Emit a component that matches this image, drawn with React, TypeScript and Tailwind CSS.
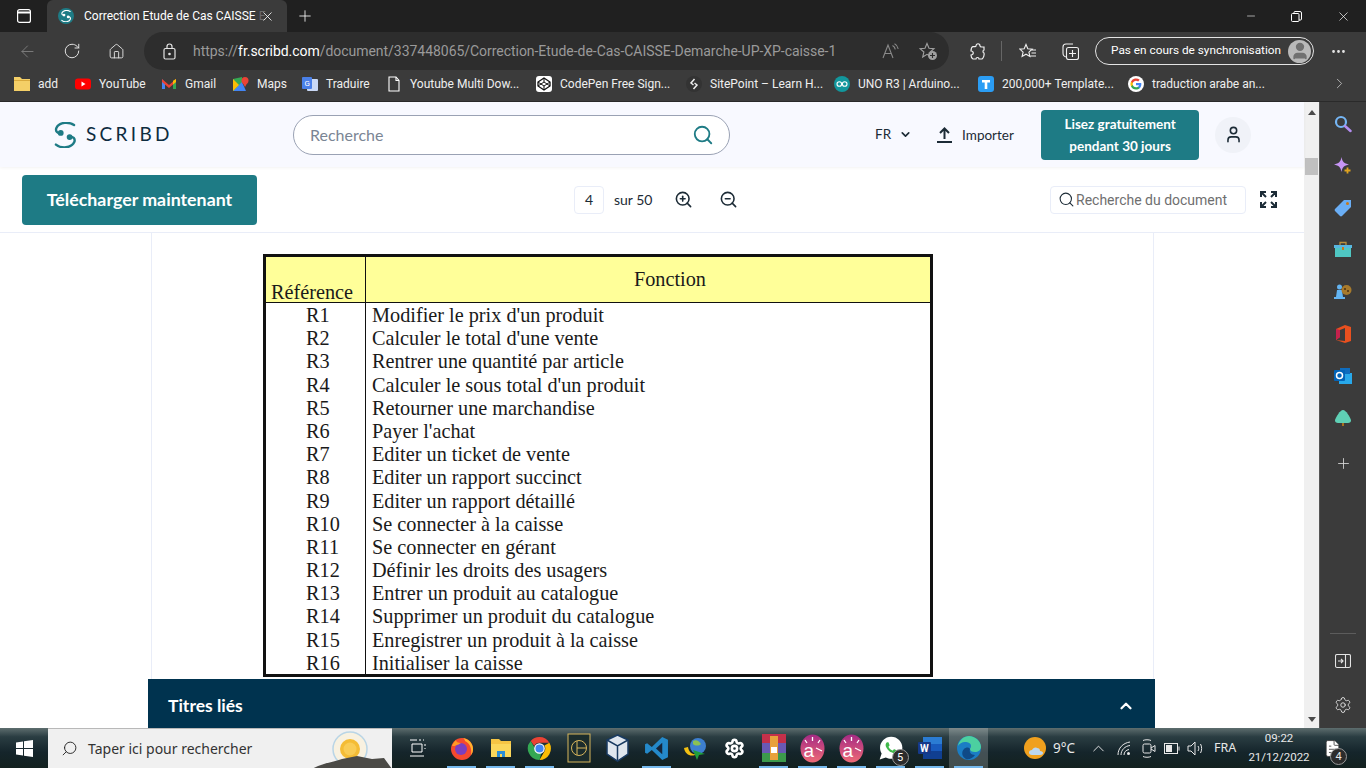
import { ReactNode } from "react";
import { IoLogoWhatsapp } from "react-icons/io";
import {
  ArrowLeft,
  ChevronDown,
  ChevronRight,
  ChevronUp,
  Ellipsis,
  House,
  Minus,
  Plus,
  RotateCw,
  Search,
  Settings,
  User,
  X,
  ZoomIn,
  ZoomOut,
  FileText,
} from "lucide-react";

const rows = [
  ["R1", "Modifier le prix d'un produit"],
  ["R2", "Calculer le total d'une vente"],
  ["R3", "Rentrer une quantité par article"],
  ["R4", "Calculer le sous total d'un produit"],
  ["R5", "Retourner une marchandise"],
  ["R6", "Payer l'achat"],
  ["R7", "Editer un ticket de vente"],
  ["R8", "Editer un rapport succinct"],
  ["R9", "Editer un rapport détaillé"],
  ["R10", "Se connecter à la caisse"],
  ["R11", "Se connecter en gérant"],
  ["R12", "Définir les droits des usagers"],
  ["R13", "Entrer un produit au catalogue"],
  ["R14", "Supprimer un produit du catalogue"],
  ["R15", "Enregistrer un produit à la caisse"],
  ["R16", "Initialiser la caisse"],
];

function ScribdMark({ w, h, color }: { w: number; h: number; color: string }) {
  return (
    <svg width={w} height={h} viewBox="0 0 63 76" fill="none">
      <path d="M58 9C45 0 15-2 6 18C3 28 10 33 18 34" stroke={color} strokeWidth="7" strokeLinecap="round" />
      <path d="M5 66C20 78 50 78 59 58C62 48 55 43 46 42" stroke={color} strokeWidth="7" strokeLinecap="round" />
      <circle cx="19" cy="32" r="8.500" fill={color} />
      <circle cx="45" cy="44" r="8.500" fill={color} />
    </svg>
  );
}

function GoogleIcon() {
  return (
    <svg width="16" height="16" viewBox="0 0 24 24">
      <circle cx="12" cy="12" r="12" fill="#fff" />
      <path d="M20 12.200c0-.6-.1-1.200-.2-1.700H12v3.300h4.500a3.900 3.900 0 0 1-1.700 2.500v2.100h2.700c1.600-1.500 2.500-3.600 2.500-6.200z" fill="#4285f4" />
      <path d="M12 20.300c2.200 0 4.100-.7 5.500-2l-2.700-2.100c-.7.500-1.700.8-2.800.8-2.200 0-4-1.400-4.700-3.400H4.500v2.100a8.300 8.300 0 0 0 7.500 4.600z" fill="#34a853" />
      <path d="M7.300 13.600a5 5 0 0 1 0-3.200V8.300H4.500a8.300 8.300 0 0 0 0 7.400z" fill="#fbbc05" />
      <path d="M12 7c1.200 0 2.300.4 3.200 1.200l2.400-2.400A8.300 8.300 0 0 0 4.500 8.300l2.800 2.100C8 8.400 9.800 7 12 7z" fill="#ea4335" />
    </svg>
  );
}

const bookmarks: { label: string; cls: string; icon: ReactNode }[] = [
  {
    label: "add",
    cls: "w-[61px]",
    icon: (
      <svg width="16" height="16" viewBox="0 0 16 16">
        <path d="M0 1h6l2 2h8v12H0z" fill="#f4cf67" />
        <path d="M0 4h16v1H0z" fill="#d9a93c" />
      </svg>
    ),
  },
  {
    label: "YouTube",
    cls: "w-[86px]",
    icon: (
      <svg width="16" height="16" viewBox="0 0 16 16">
        <rect y="2.500" width="16" height="11" rx="3" fill="#f00" />
        <path d="M6.500 5.500v5l4-2.500z" fill="#fff" />
      </svg>
    ),
  },
  {
    label: "Gmail",
    cls: "w-[72px]",
    icon: (
      <svg width="16" height="16" viewBox="0 0 16 16">
        <path d="M1 3v10h3V7z" fill="#4285f4" />
        <path d="M15 3v10h-3V7z" fill="#34a853" />
        <path d="M1 3l7 6 7-6v3L8 12 1 6z" fill="#ea4335" />
        <path d="M12 4.700 15 3v3l-3 2.500z" fill="#fbbc05" />
      </svg>
    ),
  },
  {
    label: "Maps",
    cls: "w-[69px]",
    icon: (
      <svg width="16" height="16" viewBox="0 0 16 16">
        <path d="M0 3l9-2v14l-9 0z" fill="#34a853" />
        <path d="M0 15 9 6l4 9z" fill="#4285f4" />
        <path d="M0 3l6 6-6 6z" fill="#fbbc05" />
        <circle cx="12" cy="4.500" r="3.500" fill="#ea4335" />
        <path d="M9.500 6.500 12 11l2.500-4.500z" fill="#ea4335" />
      </svg>
    ),
  },
  {
    label: "Traduire",
    cls: "w-[84px]",
    icon: (
      <svg width="16" height="16" viewBox="0 0 16 16">
        <rect x="5" y="3" width="11" height="12" rx="1" fill="#c9d8f5" />
        <rect y="1" width="10" height="12" rx="1" fill="#4a80e8" />
        <text x="2.500" y="10" fontSize="8" fill="#fff" fontFamily="Roboto, sans-serif">G</text>
      </svg>
    ),
  },
  {
    label: "Youtube Multi Dow...",
    cls: "w-[150px]",
    icon: (
      <svg width="16" height="16" viewBox="0 0 16 16" fill="none" stroke="#fff" strokeWidth="1.100">
        <path d="M3 1h7l3 3.500V15H3z" />
        <path d="M10 1v3.500h3" />
      </svg>
    ),
  },
  {
    label: "CodePen Free Sign...",
    cls: "w-[150px]",
    icon: (
      <svg width="16" height="16" viewBox="0 0 16 16">
        <rect width="16" height="16" rx="3" fill="#fff" />
        <path d="M8 2l6 4v4l-6 4-6-4V6z" fill="none" stroke="#111" strokeWidth="1.300" />
        <path d="M2 6l6 4 6-4M2 10l6-4 6 4M8 2v4M8 10v4" fill="none" stroke="#111" strokeWidth="1" />
      </svg>
    ),
  },
  {
    label: "SitePoint – Learn H...",
    cls: "w-[148px]",
    icon: (
      <svg width="16" height="16" viewBox="0 0 16 16">
        <circle cx="8" cy="8" r="8" fill="#333" />
        <path d="M8.500 3 5 7l2.500 2M7.500 13 11 9 8.500 7" fill="none" stroke="#eee" strokeWidth="1.500" />
      </svg>
    ),
  },
  {
    label: "UNO R3 | Arduino...",
    cls: "w-[144px]",
    icon: (
      <svg width="16" height="16" viewBox="0 0 16 16">
        <circle cx="8" cy="8" r="8" fill="#12979d" />
        <circle cx="5.300" cy="8" r="2.300" fill="none" stroke="#fff" strokeWidth="1.100" />
        <circle cx="10.700" cy="8" r="2.300" fill="none" stroke="#fff" strokeWidth="1.100" />
      </svg>
    ),
  },
  {
    label: "200,000+ Template...",
    cls: "w-[150px]",
    icon: (
      <svg width="16" height="16" viewBox="0 0 16 16">
        <rect width="16" height="16" rx="3" fill="#2b9df4" />
        <path d="M4 4h8v2.500H9.300V13H6.700V6.500H4z" fill="#fff" />
      </svg>
    ),
  },
  {
    label: "traduction arabe an...",
    cls: "w-[150px]",
    icon: <GoogleIcon />,
  },
];

function SideIcon({ children, cls }: { children: ReactNode; cls: string }) {
  return <div className={`flex justify-center items-center w-[46px] h-[42px] ${cls}`}>{children}</div>;
}

function EdgeSidebar() {
  return (
    <div className="w-[46px] shrink-0 bg-[#3b3b3b] flex flex-col items-center pt-[1px] relative">
      <SideIcon cls="">
        <svg width="18" height="18" viewBox="0 0 18 18" fill="none">
          <circle cx="7" cy="7" r="5" stroke="#75b6f5" strokeWidth="2.200" />
          <path d="M11 11l5.500 5" stroke="#b48df0" strokeWidth="2.500" strokeLinecap="round" />
        </svg>
      </SideIcon>
      <SideIcon cls="">
        <svg width="18" height="18" viewBox="0 0 18 18">
          <path d="M7.500 0C8.500 5 10 6.500 15 7.500 10 8.500 8.500 10 7.500 15 6.500 10 5 8.500 0 7.500 5 6.500 6.500 5 7.500 0z" fill="#c795f5" />
          <path d="M13.500 10.500v6M10.500 13.500h6" stroke="#e0a420" strokeWidth="1.800" />
        </svg>
      </SideIcon>
      <SideIcon cls="">
        <svg width="18" height="18" viewBox="0 0 18 18">
          <path d="M10 1h7v7L8 17a1.500 1.500 0 0 1-2 0L1 12a1.500 1.500 0 0 1 0-2z" fill="#6aaef5" />
          <circle cx="13.500" cy="4.500" r="1.500" fill="#c8791a" />
        </svg>
      </SideIcon>
      <SideIcon cls="">
        <svg width="18" height="18" viewBox="0 0 18 18">
          <path d="M6 4V1.500h6V4" fill="none" stroke="#b98f3d" strokeWidth="1.300" />
          <rect y="4" width="18" height="3" fill="#58b7e0" />
          <rect x="1" y="7" width="16" height="9" fill="#4fc7c3" />
          <rect x="8" y="6" width="2" height="3" fill="#c8791a" />
        </svg>
      </SideIcon>
      <SideIcon cls="">
        <svg width="18" height="18" viewBox="0 0 18 18">
          <circle cx="5.500" cy="4" r="2.500" fill="#63b4f2" />
          <path d="M3 7h5l1 7h2v2H0v-2h2z" fill="#63b4f2" />
          <circle cx="12.500" cy="7" r="5" fill="#a77a2c" />
          <circle cx="11" cy="6" r="1" fill="#4a2f10" />
          <circle cx="14" cy="8" r="1" fill="#4a2f10" />
        </svg>
      </SideIcon>
      <SideIcon cls="">
        <svg width="18" height="18" viewBox="0 0 18 18">
          <path d="M11 0l6 2v14l-6 2-9-3 9 1V3L6 5v7l-4 3V4z" fill="#e8501f" />
          <path d="M6 5v7l-4 3V4z" fill="#c4214d" />
        </svg>
      </SideIcon>
      <SideIcon cls="">
        <svg width="18" height="18" viewBox="0 0 18 18">
          <rect x="5" y="6" width="13" height="11" fill="#28a8ea" />
          <rect x="6" y="1" width="10" height="6" fill="#0f6cbd" />
          <rect y="3" width="11" height="11" rx="1" fill="#0364b8" />
          <circle cx="5.500" cy="8.500" r="3" fill="none" stroke="#fff" strokeWidth="1.500" />
        </svg>
      </SideIcon>
      <SideIcon cls="">
        <svg width="18" height="18" viewBox="0 0 18 18">
          <rect x="8" y="13" width="2" height="4" fill="#a8701e" />
          <path d="M9 1c3 0 7 7 8 10 .5 2-1.500 3-3 3H4c-1.500 0-3.500-1-3-3C2 8 6 1 9 1z" fill="#5fd0b5" />
        </svg>
      </SideIcon>
      <SideIcon cls="mt-[3px]">
        <Plus size={17} color="#d8d8d8" strokeWidth={1.200} />
      </SideIcon>
      <div className="flex-1" />
      <div className="w-[26px] h-px bg-[#5c5c5c] mb-[6px]" />
      <SideIcon cls="h-[34px]">
        <svg width="16" height="16" viewBox="0 0 16 16" fill="none" stroke="#e4e4e4" strokeWidth="1.100">
          <rect x="0.500" y="1.500" width="15" height="13" rx="1.500" />
          <path d="M10.500 1.500v13M3 8h5M6 6l2 2-2 2" />
        </svg>
      </SideIcon>
      <SideIcon cls="h-[46px]">
        <Settings size={18} color="#e4e4e4" strokeWidth={1.200} />
      </SideIcon>
    </div>
  );
}

function TaskIcon({ children, open, active, cls }: { children: ReactNode; open?: boolean; active?: boolean; cls?: string }) {
  return (
    <div className={`w-[39px] h-10 flex items-center justify-center relative ${active ? "bg-white/20" : ""} ${cls ?? ""}`}>
      {children}
      {open && <div className="absolute bottom-0 left-[5px] right-[5px] h-[2px] bg-[#76b9ed]" />}
    </div>
  );
}

function ABubble() {
  return (
    <svg width="25" height="29" viewBox="0 0 25 29">
      <defs>
        <linearGradient id="bubble" x1="0" y1="0" x2="0" y2="1">
          <stop offset="0" stopColor="#a52a84" />
          <stop offset="1" stopColor="#ee6a76" />
        </linearGradient>
      </defs>
      <ellipse cx="12.500" cy="14.500" rx="12" ry="14" fill="url(#bubble)" />
      <path d="M12.500 3v4M5 6l2 3M20 6l-2 3M16 14l6 3" stroke="#fff" strokeWidth="1.300" />
      <text x="3.500" y="23" fontSize="19" fill="#fff" fontFamily="Liberation Sans, sans-serif">a</text>
    </svg>
  );
}

function Taskbar() {
  return (
    <div className="h-10 shrink-0 flex items-center text-white bg-[linear-gradient(180deg,#5d6d6e_0%,#2a3d42_22%,#15252b_60%,#13211f_100%)] font-['Roboto',sans-serif]">
      <div className="w-12 flex justify-center">
        <svg width="17" height="17" viewBox="0 0 17 17" fill="#fff">
          <path d="M0 2.500 7 1.500V8H0zM8 1.300 17 0v8H8zM0 9h7v6.500L0 14.500zM8 9h9v8l-9-1.300z" />
        </svg>
      </div>
      <div className="w-[344px] h-10 bg-[#f0f0f0] flex items-center relative overflow-hidden border-t border-[#b8b8b8]">
        <Search size={17} color="#222" strokeWidth={1.300} className="ml-[13px] -scale-x-100" />
        <span className="ml-[10px] text-[14px] text-[#333] font-['Noto_Sans',sans-serif]">Taper ici pour rechercher</span>
        <svg className="absolute left-[264px] top-0" width="80" height="40" viewBox="0 0 80 40">
          <circle cx="38" cy="20" r="17" fill="#f8f1e0" stroke="#b9d5e6" strokeWidth="1.500" />
          <circle cx="38" cy="20" r="10" fill="#f4bc35" />
          <circle cx="38" cy="20" r="6.500" fill="#f9cc55" />
          <path d="M0 40C10 34 22 33 30 30L45 27 60 30 72 29 80 40z" fill="#4b4a46" />
        </svg>
      </div>
      <div className="ml-[6px] flex">
        <TaskIcon cls="mr-[5px]">
          <svg width="16" height="18" viewBox="0 0 16 18" fill="none" stroke="#fff" strokeWidth="1">
            <path d="M0 1h7M9 1h2M13 1h1M0 17h14M2 5h10v8H2zM15 5v2M15 9v1" />
          </svg>
        </TaskIcon>
        <TaskIcon open>
          <svg width="26" height="26" viewBox="0 0 26 26">
            <circle cx="13" cy="14" r="11" fill="#f5492f" />
            <path d="M13 3c6 0 11 5 11 11 0 3-1 5-2 6 1-6-1-12-6-14 0-1-1-3-3-3z" fill="#ffb32d" />
            <circle cx="12" cy="14" r="6" fill="#7a3fc0" />
            <path d="M3 11c1-3 3-5 4-6 0 2 2 3 5 3-2 1-3 2-4 2-2 1-3 1-5 1z" fill="#ff9a25" />
          </svg>
        </TaskIcon>
        <TaskIcon open>
          <svg width="24" height="24" viewBox="0 0 24 24">
            <path d="M2 3h8l2 2h10v16H2z" fill="#f6c544" />
            <rect x="2" y="8" width="20" height="13" fill="#fbd75b" />
            <path d="M8 21v-6h8v6h-3v-3h-2v3z" fill="#2c8ed6" />
          </svg>
        </TaskIcon>
        <TaskIcon open>
          <svg width="25" height="25" viewBox="0 0 24 24">
            <path d="M12 1a11 11 0 0 1 9.500 5.500H12A5.500 5.500 0 0 0 7 9.700L3.500 4.800A11 11 0 0 1 12 1z" fill="#ea4335" />
            <path d="M21.500 6.500A11 11 0 0 1 12 23l4.700-8.200A5.500 5.500 0 0 0 16.700 9z" fill="#fbbc05" />
            <path d="M12 23A11 11 0 0 1 3.500 4.800L8 12.500a5.500 5.500 0 0 0 6 3z" fill="#34a853" />
            <circle cx="12" cy="12" r="4.500" fill="#4285f4" stroke="#fff" strokeWidth="1.200" />
          </svg>
        </TaskIcon>
        <TaskIcon>
          <svg width="24" height="30" viewBox="0 0 24 30" fill="none" stroke="#d8b65c" strokeWidth="1">
            <rect x="1" y="1" width="22" height="28" fill="#1b2c2c" />
            <circle cx="12" cy="15" r="7.500" />
            <path d="M10 8v14M10 15h9" />
          </svg>
        </TaskIcon>
        <TaskIcon>
          <svg width="23" height="28" viewBox="0 0 23 28">
            <path d="M11.500 1 22 6v14l-10.500 7L1 20V6z" fill="#dfe6ee" stroke="#183a61" strokeWidth="1.500" />
            <path d="M1 6l10.500 6L22 6M11.500 12v15" fill="none" stroke="#183a61" strokeWidth="1.500" />
          </svg>
        </TaskIcon>
        <TaskIcon open>
          <svg width="25" height="25" viewBox="0 0 24 24">
            <path d="M17.500 1 23 3.500v17L17.500 23 7.500 13.500 3 17l-2-1V8l2-1 4.500 3.500z" fill="#2489ca" />
            <path d="M17.500 6.500 11.500 12l6 5.500z" fill="#15253a" />
          </svg>
        </TaskIcon>
        <TaskIcon>
          <svg width="26" height="26" viewBox="0 0 26 26">
            <circle cx="15" cy="11" r="8" fill="#3d7fd0" />
            <path d="M10 6c3-2 6 0 8 3-2 2-6 2-8 0z" fill="#8cc152" />
            <path d="M1 13c1 6 6 9 11 7l2-1C10 20 6 18 5 12z" fill="#f2c013" />
            <path d="M10 15l12 4-6 1-2 5z" fill="#1fa03c" />
          </svg>
        </TaskIcon>
        <TaskIcon>
          <Settings size={21} color="#fff" strokeWidth={3} />
        </TaskIcon>
        <TaskIcon open>
          <svg width="24" height="28" viewBox="0 0 24 28">
            <rect width="24" height="9" fill="#c4304a" />
            <rect y="9" width="24" height="10" fill="#6a59b5" />
            <rect y="19" width="24" height="9" fill="#3c9a4c" />
            <rect x="8" y="2" width="8" height="24" fill="#e8a13c" />
            <rect x="9" y="13" width="6" height="6" fill="#fff" />
          </svg>
        </TaskIcon>
        <TaskIcon open>
          <ABubble />
        </TaskIcon>
        <TaskIcon open>
          <ABubble />
        </TaskIcon>
        <TaskIcon open>
          <div className="relative">
            <div className="absolute left-[4px] top-[4px] w-[18px] h-[18px] rounded-full bg-[#3fb84a]" />
            <IoLogoWhatsapp size={26} color="#fff" className="relative" />
            <span className="absolute left-[14px] top-[14px] w-[17px] h-[17px] rounded-full bg-[#2c2c2c] border border-[#999] text-[11px] leading-[15px] text-center">5</span>
          </div>
        </TaskIcon>
        <TaskIcon open>
          <svg width="26" height="26" viewBox="0 0 26 26">
            <rect x="6" y="2" width="19" height="22" fill="#2b7cd3" />
            <rect x="6" y="16" width="19" height="8" fill="#103f91" />
            <rect x="6" y="9" width="19" height="7" fill="#185abd" />
            <rect x="1" y="7" width="13" height="12" rx="1" fill="#15398a" />
            <text x="3" y="17" fontSize="10" fontWeight="700" fill="#fff" fontFamily="Roboto, sans-serif">W</text>
          </svg>
        </TaskIcon>
        <TaskIcon open active>
          <svg width="26" height="26" viewBox="0 0 26 26">
            <circle cx="13" cy="13" r="12" fill="#1b7dc4" />
            <path d="M2 11C3 5 8 1 13 1c6 0 12 5 12 11 0 3-3 5-6 5-3 0-5-1-5-3 0-1 1-1 1-3 0-3-3-4-6-4-3 0-6 2-7 4z" fill="#4cd0a0" />
            <path d="M10 24c-4-2-5-7-2-10 2-2 5-2 6 0-1 3 1 6 5 6-2 3-6 5-9 4z" fill="#0f4a87" />
          </svg>
        </TaskIcon>
      </div>
      <div className="flex-1" />
      <div className="flex items-center text-[#e8e8e8] relative h-10 w-[357px] shrink-0">
        <div className="w-[24px] h-[26px] ml-[15px] relative">
          <svg width="24" height="26" viewBox="0 0 24 26">
            <circle cx="11" cy="13" r="11" fill="#f0a01e" />
            <path d="M8 20c-2 0-3-1-3-2.500S6 15 8 15c1-2 3-3 5-2 2 0 3 1 3 3 2 0 3 1 3 2s-1 2-3 2z" fill="#bcd7f0" />
          </svg>
        </div>
        <span className="ml-[5px] text-[13.500px] w-[40px] font-['Noto_Sans',sans-serif]">9°C</span>
        <ChevronUp size={19} strokeWidth={1.200} className="ml-[-4px]" />
        <svg className="ml-[9px]" width="15" height="15" viewBox="0 0 15 15" fill="none" stroke="#e8e8e8" strokeWidth="1">
          <path d="M1 14C1 7 6 2 13 1M4 14C4 9 8 5 13 4.500M7 14c0-3 2-5 5-5.500" />
          <circle cx="11.500" cy="12.500" r="1.500" fill="#e8e8e8" stroke="none" />
        </svg>
        <svg className="ml-[9px]" width="15" height="19" viewBox="0 0 15 19" fill="none" stroke="#e8e8e8" strokeWidth="1">
          <path d="M2 1.500C4 .5 8 .5 10 1.500M2 17.500c2 1 6 1 8 0" />
          <rect x="2" y="5" width="8" height="9" rx="1.500" />
          <path d="M10 9l4-2.500v6L10 10" />
        </svg>
        <svg className="ml-[8px]" width="16" height="11" viewBox="0 0 16 11" fill="none" stroke="#e8e8e8" strokeWidth="1">
          <rect x="0.500" y="0.500" width="13" height="10" />
          <rect x="2" y="2" width="6" height="7" fill="#e8e8e8" stroke="none" />
          <path d="M15 3.500v4" />
        </svg>
        <svg className="ml-[7px]" width="17" height="15" viewBox="0 0 17 15" fill="none" stroke="#e8e8e8" strokeWidth="1">
          <path d="M1 5h3l4-4v13l-4-4H1zM11 5c1 1.500 1 3.500 0 5M13.500 3c1.500 2.500 1.500 6.500 0 9" />
        </svg>
        <span className="ml-[10px] text-[12.500px] w-[28px] font-['Noto_Sans',sans-serif]">FRA</span>
        <div className="ml-[4px] w-[66px] text-[11.500px] text-center leading-[19px]">
          <div>09:22</div>
          <div>21/12/2022</div>
        </div>
        <div className="ml-[11px] relative">
          <FileText size={19} color="#fff" fill="#fff" stroke="#333" strokeWidth={1} />
          <span className="absolute left-[7px] top-[9px] w-[17px] h-[17px] rounded-full bg-[#2c2c2c] border border-[#999] text-[11px] leading-[15px] text-center">4</span>
        </div>
      </div>
    </div>
  );
}

function Browser() {
  return (
    <>
      <div className="h-8 shrink-0 bg-[#202020] flex items-center text-white">
        <div className="w-[47px] flex justify-center">
          <svg width="14" height="14" viewBox="0 0 14 14" fill="none" stroke="#fff" strokeWidth="1.200">
            <rect x="0.600" y="0.600" width="12.800" height="12.800" rx="2" />
            <path d="M1 3.500h12" strokeWidth="2" />
          </svg>
        </div>
        <div className="w-[240px] h-8 mt-0 bg-[#3b3b3b] rounded-t-md flex items-center pl-[11px]">
          <div className="w-4 h-4 rounded-full bg-[#1e7b85] flex items-center justify-center">
            <ScribdMark w={10} h={12} color="#fff" />
          </div>
          <span className="ml-[10px] text-[12px] w-[174px] whitespace-nowrap">
            Correction Etude de Cas CAISSE <span className="text-white/25">E</span>
          </span>
          <X size={15} color="#fff" strokeWidth={1.300} className="ml-[2px]" />
        </div>
        <Plus size={18} color="#fff" strokeWidth={1.100} className="ml-[9px]" />
        <div className="flex-1" />
        <Minus size={12} color="#fff" strokeWidth={1.200} className="mr-[34px]" />
        <svg width="11" height="11" viewBox="0 0 11 11" fill="none" stroke="#fff" strokeWidth="1" className="mr-[34px]">
          <rect x="0.500" y="2.500" width="7.500" height="8" rx="1" />
          <path d="M3 2.500V1.500a1 1 0 0 1 1-1h5a1.500 1.500 0 0 1 1.500 1.500v6a1 1 0 0 1-1 1H8" />
        </svg>
        <X size={15} color="#fff" strokeWidth={1.100} className="mr-[15px]" />
      </div>

      <div className="h-[38px] shrink-0 bg-[#3b3b3b] flex items-center">
        <ArrowLeft size={19} color="#7c7c7c" strokeWidth={1.200} className="ml-[18px]" />
        <RotateCw size={18} color="#e4e4e4" strokeWidth={1.300} className="ml-[26px]" />
        <House size={17} color="#e4e4e4" strokeWidth={1.300} className="ml-[27px]" />
        <div className="ml-[19px] w-[805px] h-[38px] rounded-full bg-[#2d2d2d] flex items-center">
          <svg className="ml-[19px]" width="13" height="17" viewBox="0 0 13 17" fill="none" stroke="#e4e4e4" strokeWidth="1.200">
            <rect x="1" y="5.500" width="11" height="10.500" rx="1.500" />
            <path d="M4 5.500V3.500a2.500 2.500 0 0 1 5 0v2" />
            <circle cx="6.500" cy="11" r="0.700" fill="#e4e4e4" />
          </svg>
          <span className="ml-[17px] w-[642px] text-[14px] tracking-[-0.04px] text-[#9a9a9a] whitespace-nowrap">
            https://<span className="text-white">fr.scribd.com</span>/document/337448065/Correction-Etude-de-Cas-CAISSE-Demarche-UP-XP-caisse-1
          </span>
          <svg className="ml-[47px]" width="17" height="16" viewBox="0 0 17 16" fill="none" stroke="#8a8a8a" strokeWidth="1.100">
            <path d="M1 15 6 2l5 13M3 10.500h6M10.500 2.500c1.500.8 2.500 2 2.800 3.800M12.500 .8c2 1 3.300 3 3.700 5" />
          </svg>
          <svg className="ml-[20px]" width="19" height="19" viewBox="0 0 19 19" fill="none" stroke="#a0a0a0" strokeWidth="1.100">
            <path d="M8 1.500l2 4.700 5 .5-3.800 3.300 1.200 5-4.400-2.700-4.300 2.700 1.200-5L1 6.700l5-.5z" />
            <circle cx="13.500" cy="13.500" r="4.500" fill="#a0a0a0" stroke="none" />
            <path d="M13.500 11v5M11 13.500h5" stroke="#2d2d2d" />
          </svg>
        </div>
        <svg className="ml-[21px]" width="16" height="17" viewBox="0 0 16 17" fill="none" stroke="#f0f0f0" strokeWidth="1.200">
          <path d="M6 3c0-3 4-3 4 0 0 1 1 1 2 1h2v3c-1 0-1 .5-1 1.500s.5 1.500 1 1.500c.5 2-.5 5-2 6H9c0-2-3-2-3 0H3c-2-1-2-3-2-4 3 0 3-4 0-4 0-2 .5-4 2-4.500 1 0 3 .5 3-.5z" />
        </svg>
        <div className="w-px h-5 bg-[#666] ml-[15px]" />
        <svg className="ml-[17px]" width="18" height="17" viewBox="0 0 18 17" fill="none" stroke="#f0f0f0" strokeWidth="1.100">
          <path d="M7 1.500l1.800 4.200 4.400.4-3.300 3 1 4.400L7 11.200l-3.900 2.300 1-4.400-3.300-3 4.400-.4zM12 7h5M12.500 10h4.500M11.500 13h5.500" />
        </svg>
        <svg className="ml-[25px]" width="17" height="17" viewBox="0 0 17 17" fill="none" stroke="#f0f0f0" strokeWidth="1.100">
          <path d="M4.500 14C2 14 1 12 1 10V4c0-2 1-3 3-3h7" />
          <rect x="4.500" y="4.500" width="12" height="12" rx="2" />
          <path d="M10.500 7v7M7 10.500h7" />
        </svg>
        <div className="ml-[16px] w-[219px] h-[28px] rounded-full border border-[#e4e4e4] flex items-center text-white text-[11.800px] pl-[15px]">
          <span className="w-[177px] whitespace-nowrap">Pas en cours de synchronisation</span>
          <div className="w-[23px] h-[23px] rounded-full bg-[#b9b9b9] flex items-center justify-center overflow-hidden">
            <User size={20} color="#707070" fill="#707070" />
          </div>
        </div>
        <Ellipsis size={17} color="#e4e4e4" className="ml-[16px]" />
      </div>

      <div className="h-[32px] pb-[4px] shrink-0 bg-[#3b3b3b] flex items-center pl-[14px] text-[12px] text-[#efefef] border-b border-[#2a2a2a]">
        {bookmarks.map((b) => (
          <div key={b.label} className={`flex items-center gap-[8px] shrink-0 ${b.cls}`}>
            <span className="shrink-0 w-4 h-4 flex">{b.icon}</span>
            <span className="whitespace-nowrap">{b.label}</span>
          </div>
        ))}
        <ChevronRight size={17} color="#c4c4c4" strokeWidth={1.200} className="ml-[53px]" />
      </div>
    </>
  );
}

function ScribdHeader() {
  return (
    <div className="h-[65px] shrink-0 bg-[#f8f9ff] shadow-[0_1px_3px_rgba(0,0,0,0.05)] flex items-center relative z-10 text-[#1c2b36]">
      <div className="ml-[54px] w-[22px] flex">
        <ScribdMark w={22} h={26} color="#1e7b85" />
      </div>
      <span className="ml-[10px] w-[207px] text-[19px] tracking-[3.300px] font-['Lato',sans-serif] text-[#0d2c3f]">SCRIBD</span>
      <div className="w-[437px] h-10 rounded-full border border-[#9aa2b4] bg-white flex items-center justify-between pl-[16px] pr-[15px]">
        <span className="text-[16px] text-[#7a8594]">Recherche</span>
        <Search size={22} color="#1e7b85" strokeWidth={2} />
      </div>
      <span className="ml-[145px] text-[13.500px]">FR</span>
      <ChevronDown size={13} strokeWidth={3} className="ml-[8px]" />
      <div className="ml-[25px] flex flex-col items-center w-[15px]">
        <svg width="15" height="16" viewBox="0 0 15 16" fill="none" stroke="#1c2b36" strokeWidth="2">
          <path d="M7.500 12V2M3 6l4.500-4.500L12 6M0 15h15" />
        </svg>
      </div>
      <span className="ml-[10px] pt-[1px] text-[13.500px] w-[51px] whitespace-nowrap">Importer</span>
      <div className="ml-[28px] w-[158px] h-[50px] rounded bg-[#1e7b85] text-white font-bold text-[13.500px] leading-[22px] flex flex-col items-center justify-center">
        <span>Lisez gratuitement</span>
        <span>pendant 30 jours</span>
      </div>
      <div className="ml-[16px] w-9 h-9 rounded-full bg-[#f0f2f8] flex items-center justify-center">
        <User size={19} strokeWidth={2} />
      </div>
    </div>
  );
}

function DocToolbar() {
  return (
    <div className="h-[66px] shrink-0 bg-white border-b border-[#e9edf8] flex items-center text-[#1c2b36]">
      <div className="ml-[22px] w-[235px] h-[50px] rounded bg-[#1e7b85] text-white font-bold text-[17.800px] flex items-center justify-center">
        Télécharger maintenant
      </div>
      <div className="ml-[317px] w-[30px] h-[28px] rounded border border-[#e9edf8] text-[14px] flex items-center justify-center">4</div>
      <span className="ml-[10px] text-[14px] w-[45px] whitespace-nowrap">sur 50</span>
      <ZoomIn size={19} strokeWidth={2} className="ml-[15px]" />
      <ZoomOut size={19} strokeWidth={2} className="ml-[26px]" />
      <div className="ml-[312px] w-[196px] h-[28px] rounded border border-[#e9edf8] flex items-center pl-[7px]">
        <Search size={17} strokeWidth={1.500} />
        <span className="ml-[1px] pt-[2px] text-[14px] text-[#6f6f6f] font-['Roboto',sans-serif] whitespace-nowrap">Recherche du document</span>
      </div>
      <svg className="ml-[14px]" width="17" height="17" viewBox="0 0 17 17" fill="none" stroke="#1c2b36" strokeWidth="2">
        <path d="M1 6V1h5M1 1l5 5M16 6V1h-5M16 1l-5 5M1 11v5h5M1 16l5-5M16 11v5h-5M16 16l-5-5" />
      </svg>
    </div>
  );
}

function FunctionTable() {
  return (
    <div className="ml-[111px] mt-[21px] w-[670px] border-[3px] border-[#111] font-['Liberation_Serif',serif] text-[20.250px] text-[#1a1a1a]">
      <div className="flex h-[46px] bg-[#ffff99] border-b border-[#111]">
        <div className="w-[100px] border-r border-[#111] pl-[5px] flex items-end leading-[19px] whitespace-nowrap">Référence</div>
        <div className="flex-1 flex items-center justify-center pl-[44px]">Fonction</div>
      </div>
      {rows.map(([ref, label]) => (
        <div key={ref} className="flex h-[23.200px] leading-[25px]">
          <div className="w-[100px] border-r border-[#111] pl-[40px]">{ref}</div>
          <div className="pl-[6px]">{label}</div>
        </div>
      ))}
    </div>
  );
}

function PageColumn() {
  return (
    <div className="flex-1 bg-white relative overflow-hidden">
      <div className="ml-[151px] w-[1003px] h-full border-x border-[#e9edf8] overflow-hidden">
        <FunctionTable />
      </div>
      <div className="absolute left-[148px] bottom-0 w-[1007px] h-[49px] bg-[#00334f] flex items-center justify-between pl-[20px] pr-[20px] pt-[5px] text-white">
        <span className="font-bold text-[17.500px]">Titres liés</span>
        <ChevronUp size={18} strokeWidth={3} />
      </div>
    </div>
  );
}

function Scrollbar() {
  return (
    <div className="w-[16px] shrink-0 bg-[#f0f0f0] flex flex-col items-center relative border-r border-[#555]">
      <div className="mt-[8px] w-0 h-0 border-x-[4px] border-x-transparent border-b-[5px] border-b-[#4a4a4a]" />
      <div className="mt-[43px] w-[13px] h-[17px] bg-[#c0c0c0]" />
      <div className="flex-1" />
      <div className="mb-[6px] w-0 h-0 border-x-[4px] border-x-transparent border-t-[5px] border-t-[#4a4a4a]" />
    </div>
  );
}

export default function App() {
  return (
    <div className="w-[1366px] h-screen overflow-hidden flex flex-col font-['Roboto',sans-serif]">
      <Browser />
      <div className="flex-1 flex min-h-0">
        <div className="w-[1304px] flex flex-col shrink-0 font-['Lato',sans-serif]">
          <ScribdHeader />
          <DocToolbar />
          <PageColumn />
        </div>
        <Scrollbar />
        <EdgeSidebar />
      </div>
      <Taskbar />
    </div>
  );
}
